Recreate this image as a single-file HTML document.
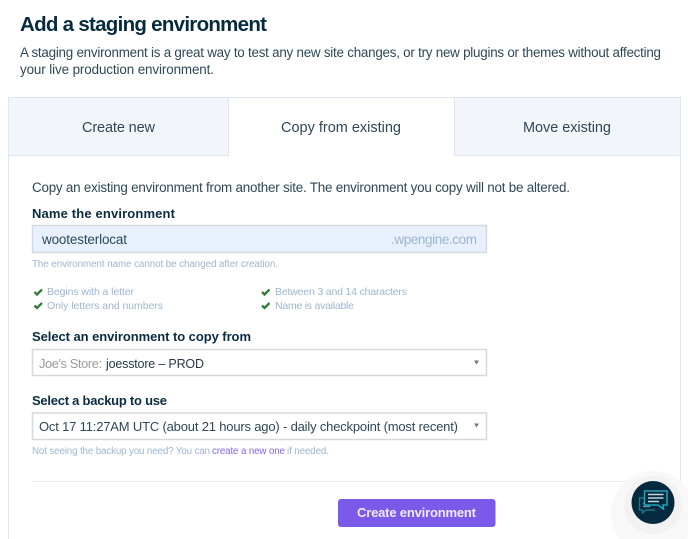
<!DOCTYPE html>
<html lang="en">
<head>
<meta charset="utf-8">
<title>Add a staging environment</title>
<style>
html,body{margin:0;padding:0;background:#fff;width:688px;height:539px;overflow:hidden}
svg{display:block;position:absolute;left:0;top:0;filter:blur(.3px)}
text{font-family:"Liberation Sans",sans-serif;white-space:pre}
.h{font-size:20.5px;font-weight:700;fill:#062b3f}
.p{font-size:13.4px;fill:#2f4857}
.t{font-size:14.5px;fill:#2f4857}
.l{font-size:13px;font-weight:700;fill:#0a2c41}
.s{font-size:9.8px;fill:#9db6d1}
.c{font-size:10.5px;fill:#9db6d1}
</style>
</head>
<body>
<svg width="688" height="539" viewBox="0 0 688 539" xmlns="http://www.w3.org/2000/svg">
<rect width="688" height="539" fill="#fff"/>

<text class="h" x="20" y="31" textLength="247" lengthAdjust="spacing">Add a staging environment</text>
<text class="p" x="20" y="57" textLength="641" lengthAdjust="spacing">A staging environment is a great way to test any new site changes, or try new plugins or themes without affecting</text>
<text class="p" x="20" y="74" textLength="194" lengthAdjust="spacing">your live production environment.</text>

<!-- Tabs -->
<rect x="8.500" y="97.500" width="672" height="442" fill="#fff" stroke="#dde6f2"/>
<rect x="9" y="98" width="219" height="57" fill="#f2f5f9"/>
<rect x="454" y="98" width="226" height="57" fill="#f2f5f9"/>
<rect x="9" y="155" width="219" height="1" fill="#dde6f2"/>
<rect x="454" y="155" width="226" height="1" fill="#dde6f2"/>
<rect x="228" y="98" width="1" height="58" fill="#dde6f2"/>
<rect x="454" y="98" width="1" height="58" fill="#dde6f2"/>
<text class="t" x="82" y="132" textLength="73" lengthAdjust="spacing">Create new</text>
<text class="t" x="281" y="132" textLength="120" lengthAdjust="spacing">Copy from existing</text>
<text class="t" x="523" y="132" textLength="88" lengthAdjust="spacing">Move existing</text>

<text class="p" x="32" y="192" textLength="538" lengthAdjust="spacing">Copy an existing environment from another site. The environment you copy will not be altered.</text>

<!-- Name -->
<text class="l" x="32" y="218" textLength="143" lengthAdjust="spacing">Name the environment</text>
<rect x="32.500" y="225.500" width="454" height="27" fill="#e8f0fe" stroke="#d5dae0" stroke-width="1.500"/>
<text x="42" y="244" font-size="13.500" fill="#2f4857" textLength="85" lengthAdjust="spacing">wootesterlocat</text>
<text x="391" y="244" font-size="13.500" fill="#9fb6cc" textLength="86" lengthAdjust="spacing">.wpengine.com</text>
<text class="s" x="32" y="267" textLength="246" lengthAdjust="spacing">The environment name cannot be changed after creation.</text>

<!-- Checks -->
<g fill="none" stroke="#2f7d3c" stroke-width="2.300">
<path d="M34.500 292l2.500 2.500 5-5"/>
<path d="M34.500 305.500l2.500 2.500 5-5"/>
<path d="M262 292l2.500 2.500 5-5"/>
<path d="M262 305.500l2.500 2.500 5-5"/>
</g>
<text class="c" x="47" y="295" textLength="87" lengthAdjust="spacing">Begins with a letter</text>
<text class="c" x="47" y="309" textLength="116" lengthAdjust="spacing">Only letters and numbers</text>
<text class="c" x="275" y="295" textLength="132" lengthAdjust="spacing">Between 3 and 14 characters</text>
<text class="c" x="275" y="309" textLength="79" lengthAdjust="spacing">Name is available</text>

<!-- Select env -->
<text class="l" x="32" y="341" textLength="219" lengthAdjust="spacing">Select an environment to copy from</text>
<rect x="32.500" y="349.500" width="454" height="26" fill="#fff" stroke="#d6d9dc" stroke-width="1.500"/>
<text x="39" y="368" font-size="12.800" fill="#9a9a9a" textLength="63" lengthAdjust="spacing">Joe's Store:</text>
<text x="106" y="368" font-size="12.500" fill="#2a3946" textLength="98" lengthAdjust="spacing">joesstore – PROD</text>
<path d="M474 360.500h5l-2.500 4z" fill="#777"/>

<!-- Select backup -->
<text class="l" x="32" y="405" textLength="135" lengthAdjust="spacing">Select a backup to use</text>
<rect x="32.500" y="413" width="454" height="26.500" fill="#fff" stroke="#d6d9dc" stroke-width="1.500"/>
<text x="39" y="431" font-size="13" fill="#2f4857" textLength="419" lengthAdjust="spacing">Oct 17 11:27AM UTC (about 21 hours ago) - daily checkpoint (most recent)</text>
<path d="M474 423.500h5l-2.500 4z" fill="#777"/>
<text class="s" x="32" y="454" textLength="178" lengthAdjust="spacing">Not seeing the backup you need? You can</text>
<text class="s" x="212" y="454" style="fill:#8468ea" textLength="73" lengthAdjust="spacing">create a new one</text>
<text class="s" x="287" y="454" textLength="42" lengthAdjust="spacing">if needed.</text>

<rect x="32" y="481" width="610" height="1" fill="#e6ebf3"/>

<!-- Button -->
<rect x="338" y="499" width="157.500" height="28" rx="3" fill="#7b5ae9"/>
<text x="357" y="517" font-size="13" font-weight="700" fill="#efeaff" textLength="119" lengthAdjust="spacing">Create environment</text>

<!-- Chat -->
<circle cx="653" cy="513" r="42" fill="#f8f8f8"/>
<circle cx="653" cy="505" r="29" fill="#f2f2f2"/>
<circle cx="653" cy="502.500" r="21.500" fill="#05293f"/>
<path d="M644 498h-4.500v12h3l0 3 3.500-3h9" fill="#05293f" stroke="#1c7486" stroke-width="1.400"/>
<path d="M643 503.500h9M643 506.500h7" stroke="#6f97a3" stroke-width="1.200"/>
<path d="M644.500 491h22.500v14h-4l.5 4-5.500-4h-13.500z" fill="#05293f" stroke="#25a3b5" stroke-width="1.500"/>
<path d="M648 494.500h15.500M648 498h15.500M648 501.500h11" stroke="#c2d6dc" stroke-width="1.500"/>
</svg>
</body>
</html>
